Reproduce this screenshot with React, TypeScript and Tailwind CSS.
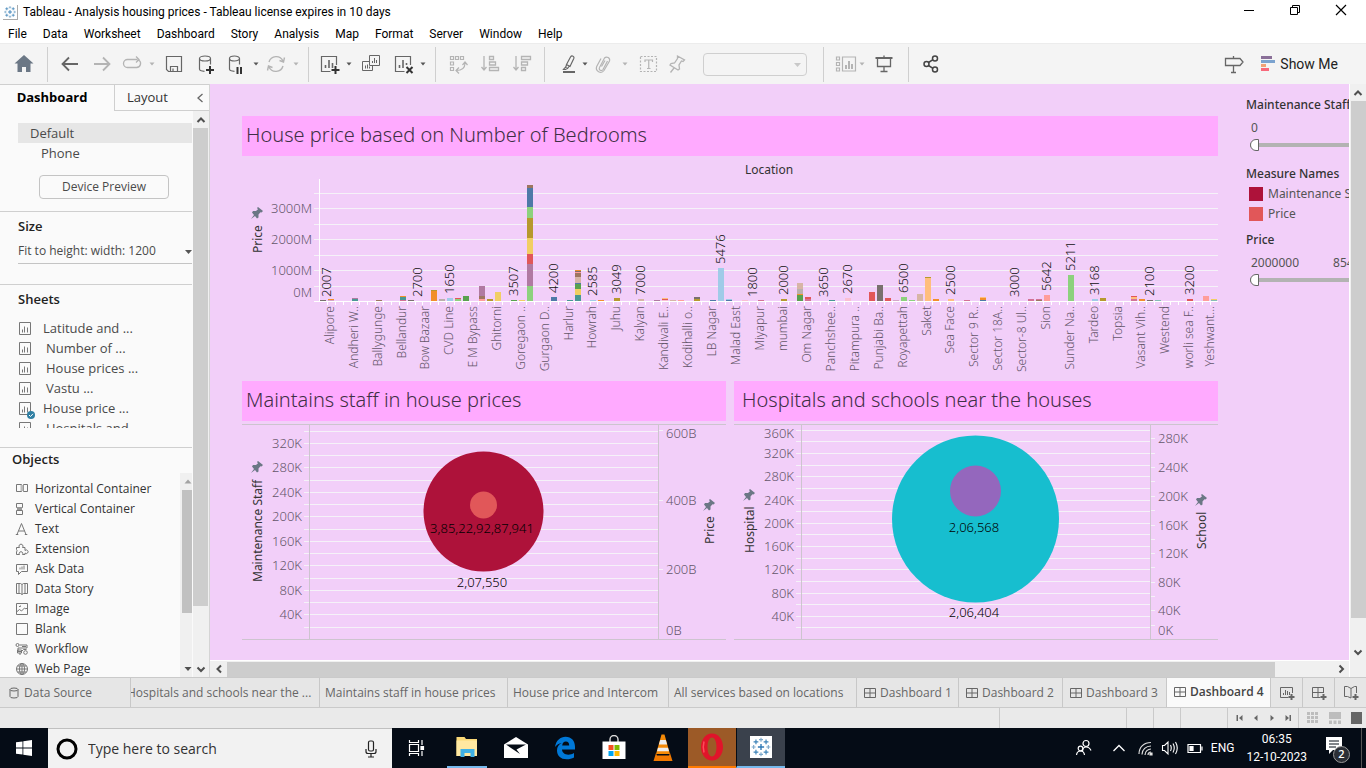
import React from "react";

const ui = "font-['Open_Sans','Noto_Sans',sans-serif]";

/* ---------- shared icon helpers ---------- */

function Ico({ children, size = 24, color = "#666", sw = 1, label }: { children: React.ReactNode; size?: number; color?: string; sw?: number; label?: string }) {
  return (
    <svg width={size} height={size} viewBox={`0 0 ${size} ${size}`} fill="none" stroke={color} strokeWidth={sw} aria-hidden={!label} aria-label={label} className="block shrink-0">
      {children}
    </svg>
  );
}

function ToolButton({ label, className = "", children }: { label: string; className?: string; children: React.ReactNode }) {
  return (
    <button type="button" aria-label={label} className={`flex h-6 w-6 shrink-0 items-center justify-center ${className}`}>
      {children}
    </button>
  );
}

function Caret({ className = "", light = false }: { className?: string; light?: boolean }) {
  return (
    <button type="button" aria-label="More" className={`flex h-6 w-2 shrink-0 items-center justify-center ${className}`}>
      <svg width="6" height="4" viewBox="0 0 6 4" className="block">
        <path d="M0.5 0.5h5L3 3.5z" fill={light ? "#b4b4b4" : "#555"} />
      </svg>
    </button>
  );
}

function Divider({ className = "" }: { className?: string }) {
  return <span className={`h-[35px] w-px shrink-0 bg-[#cfcfcf] ${className}`} />;
}

function TableauMark({ size, bg = "#fff" }: { size: number; bg?: string }) {
  const plus = (x: number, y: number, r: number, c: string, w: number) => (
    <path key={`${x}-${y}`} d={`M${x - r} ${y}h${r * 2}M${x} ${y - r}v${r * 2}`} stroke={c} strokeWidth={w} />
  );
  return (
    <svg width={size} height={size} viewBox="0 0 24 24" className="block shrink-0" aria-hidden>
      <rect width="24" height="24" fill={bg} />
      {plus(12, 12, 3.4, "#2f79b5", 1.5)}
      {plus(12, 4, 2.2, "#7aa7c9", 1.2)}
      {plus(12, 20, 2.2, "#7aa7c9", 1.2)}
      {plus(4, 12, 2.2, "#7aa7c9", 1.2)}
      {plus(20, 12, 2.2, "#7aa7c9", 1.2)}
      {plus(6.5, 6.5, 2.6, "#3b82b8", 1.3)}
      {plus(17.5, 6.5, 2.6, "#3b82b8", 1.3)}
      {plus(6.5, 17.5, 2.6, "#3b82b8", 1.3)}
      {plus(17.5, 17.5, 2.6, "#3b82b8", 1.3)}
    </svg>
  );
}

function Chevron({ dir }: { dir: "up" | "down" | "left" | "right" }) {
  const d = { up: "M1.5 7L5 3.5L8.5 7", down: "M1.5 3.5L5 7L8.5 3.5", left: "M7 1.5L3.5 5L7 8.5", right: "M3.5 1.5L7 5L3.5 8.5" }[dir];
  return (
    <svg width="10" height="10" viewBox="0 0 10 10" className="block" aria-hidden>
      <path d={d} fill="none" stroke="#4f4f4f" strokeWidth="2" />
    </svg>
  );
}

/* ---------- window chrome ---------- */

function TitleBar() {
  return (
    <header className="flex h-6 shrink-0 items-center bg-white pl-[3px] pr-[17px] font-['Roboto','Open_Sans',sans-serif]">
      <span className="border-b border-r border-[#aaa]"><TableauMark size={14} /></span>
      <h1 className="ml-[5px] text-xs text-black">Tableau - Analysis housing prices - Tableau license expires in 10 days</h1>
      <div className="ml-auto flex gap-[30px] pb-1">
        <button type="button" aria-label="Minimize">
          <Ico size={16} color="#000"><path d="M3 8.5h10" /></Ico>
        </button>
        <button type="button" aria-label="Restore">
          <Ico size={16} color="#000"><path d="M3.5 5.500h7v7h-7zM5.500 5V3.500h7v7H11" /></Ico>
        </button>
        <button type="button" aria-label="Close">
          <Ico size={16} color="#000" sw={1.2}><path d="M3 3l10 10M13 3L3 13" /></Ico>
        </button>
      </div>
    </header>
  );
}

function MenuBar() {
  const items = ["File", "Data", "Worksheet", "Dashboard", "Story", "Analysis", "Map", "Format", "Server", "Window", "Help"];
  return (
    <nav className="flex h-[19px] shrink-0 items-center gap-4 bg-white pl-2 font-['Roboto','Open_Sans',sans-serif] text-xs text-black">
      {items.map((m) => (
        <button key={m} type="button">{m}</button>
      ))}
    </nav>
  );
}

function Toolbar() {
  const d = "#666";
  const l = "#b4b4b4";
  return (
    <div role="toolbar" className="flex h-[41px] shrink-0 items-center border-t border-[#ececec] bg-[#f4f4f4]">
      <ToolButton label="Start page" className="ml-3 mr-[11px]">
        <Ico color="none"><path d="M12 3l9.500 8.500h-3V20h-4.500v-5h-4v5H5.500v-8.500h-3z" fill="#6b7785" /></Ico>
      </ToolButton>
      <Divider />
      <ToolButton label="Undo" className="ml-2.5"><Ico color={d} sw={1.8}><path d="M20 12H5M11 5.500L4.500 12l6.500 6.500" /></Ico></ToolButton>
      <ToolButton label="Redo" className="ml-2"><Ico color={l} sw={1.8}><path d="M4 12h15M13 5.500l6.500 6.500-6.500 6.500" /></Ico></ToolButton>
      <ToolButton label="Replay" className="ml-1.5"><Ico color={l} sw={1.3}><path d="M14 7.500H7.500a4 4 0 000 8h9a4 4 0 002-7.500M11.500 7.500h6M16 4.500l3 3-3 3" /></Ico></ToolButton>
      <Caret light className="ml-1" />
      <ToolButton label="Save" className="ml-1.5"><Ico color={d} sw={1.2}><path d="M4.500 4.500h15v15h-13l-2-2zM8.500 19.500v-5h7v5M11 19.500v-3" /></Ico></ToolButton>
      <ToolButton label="New data source" className="ml-2">
        <Ico color={d} sw={1.2}><path d="M5.500 6.500v10.500q0 2 5 2.300M16.500 6.500v6M5.500 6.500a5.500 2.500 0 0111 0a5.500 2.500 0 01-11 0" /><path d="M16 14v8M12 18h8" stroke="#333" strokeWidth="2" /></Ico>
      </ToolButton>
      <ToolButton label="Pause auto updates" className="ml-1.5">
        <Ico color={d} sw={1.2}><path d="M5.500 6.500v10.500q0 2 5 2.300M15.500 6.500v6M5.500 6.500a5 2.500 0 0110 0a5 2.500 0 01-10 0" /><path d="M13.500 15v7M17 15v7" stroke="#333" strokeWidth="2" /></Ico>
      </ToolButton>
      <Caret className="ml-1" />
      <ToolButton label="Run update" className="ml-1"><Ico color={l} sw={1.4}><path d="M5 10a7.500 7.500 0 0114 -1M19 14a7.500 7.500 0 01-14 1M20.500 5.500L19.500 10l-4-1.500M3.500 18.500L4.500 14l4 1.500" /></Ico></ToolButton>
      <Caret light className="ml-1" />
      <Divider className="ml-2" />
      <ToolButton label="New worksheet" className="ml-2">
        <Ico color={d} sw={1.2}><path d="M19.500 13V4.500h-15v15h9" /><path d="M8.500 16v-3M12 16V8M15.500 16v-5" strokeWidth="1.6" /><path d="M18.500 14v8M14.500 18h8" stroke="#333" strokeWidth="2" /></Ico>
      </ToolButton>
      <Caret className="ml-1" />
      <ToolButton label="Duplicate" className="ml-1.5">
        <Ico color={d}><path d="M10.500 3.500h10v10h-10zM10.500 9.500h-7v9h10v-5M6.500 16.500v-3M8.500 16.500v-4M10.500 16.500v-2M13.500 11v-2M15.500 11V6M17.500 11V8" /></Ico>
      </ToolButton>
      <ToolButton label="Clear sheet" className="ml-2">
        <Ico color={d} sw={1.2}><path d="M19.500 13V4.500h-15v15h9" /><path d="M8.500 16v-3M12 16V8M15.500 13v-2" strokeWidth="1.6" /><path d="M15.500 15l6 6M21.500 15l-6 6" stroke="#333" strokeWidth="2" /></Ico>
      </ToolButton>
      <Caret className="ml-1" />
      <Divider className="ml-2" />
      <ToolButton label="Swap rows and columns" className="ml-2.5">
        <Ico color={l} sw={1.2}><path d="M4.500 4.500h3v3h-3zM9.500 4.500h3v3h-3zM14.500 4.500h3v3h-3zM4.500 10h3v3h-3zM4.500 15.500h3v3h-3zM19 11c0 5-3 7.500-8.500 7.500M16.500 13l2.500-3 2.500 3M13 15.500l-3 3 3 3" /></Ico>
      </ToolButton>
      <ToolButton label="Sort ascending" className="ml-2">
        <Ico color={l} sw={1.3}><path d="M6 4v14M3.500 15l2.500 3 2.500-3M11.500 4.500h4v3h-4zM11.500 10h6v3h-6zM11.500 15.500h9v3h-9z" /></Ico>
      </ToolButton>
      <ToolButton label="Sort descending" className="ml-2">
        <Ico color={l} sw={1.3}><path d="M6 4v14M3.500 15l2.500 3 2.500-3M11.500 4.500h9v3h-9zM11.500 10h6v3h-6zM11.500 15.500h4v3h-4z" /></Ico>
      </ToolButton>
      <Divider className="ml-2.5" />
      <ToolButton label="Highlight" className="ml-3">
        <Ico color={d} sw={1.2}><path d="M9.500 12.500L13.500 5q1-1.500 2.500-.8t.8 2.300L13 14.500l-3.500-2zM9.500 13l-1 2.500 2 1 1.500-2M8 15.500l-1.500 2h3" /><path d="M6 20h12" strokeWidth="2" /></Ico>
      </ToolButton>
      <Caret />
      <ToolButton label="Group members" className="ml-0.5">
        <Ico color={l} sw={1.2}><path d="M16.500 9l-4.500 8.500a2 2 0 01-3.500-2l5-9.500a3 3 0 015 3l-5.500 9.500a4.200 4.200 0 01-7.300-4l4.300-8M10.500 14.500l3.500-6" /></Ico>
      </ToolButton>
      <Caret light className="ml-1.5" />
      <ToolButton label="Show mark labels" className="ml-2">
        <Ico color={l} sw={1.2}><path d="M3.500 4.500h16v15h-16z" strokeDasharray="2 1.500" /><path d="M8 10V8h7.500v2M11.750 8v8.500M10 16.500h3.500" /></Ico>
      </ToolButton>
      <ToolButton label="Fix axes" className="ml-1">
        <Ico color={l} sw={1.3}><path d="M12.500 4l7 4-1.500 1.500-1.500-.5-2.500 4 .5 4-1.500 1L5 13l1-1.500 3.500-.5 3-4.500zM9 16l-3.500 4.500" /></Ico>
      </ToolButton>
      <div className="relative ml-3.5 h-[23px] w-[104px]">
        <select aria-label="Fit" disabled className="h-full w-full appearance-none rounded-sm border border-[#cfcfcf] bg-transparent" />
        <svg width="7" height="4" viewBox="0 0 7 4" className="pointer-events-none absolute right-1.5 top-2.5"><path d="M0 0h7L3.500 4z" fill="#c8c8c8" /></svg>
      </div>
      <Divider className="ml-4" />
      <ToolButton label="Show cards" className="ml-2.5">
        <Ico color={l} sw={1.2}><path d="M2.500 5h3v3h-3zM2.500 10.500h3v3h-3zM2.500 16h3v3h-3zM8.500 5h13v14h-13z" /><path d="M12 17v-4M15 17v-8M18 17v-5" strokeWidth="2" /></Ico>
      </ToolButton>
      <Caret light />
      <ToolButton label="Presentation mode" className="ml-1.5">
        <Ico color={d} sw={1.3}><path d="M3.500 6h17" strokeWidth="2" /><path d="M5.500 6v8.500h13V6M12 14.500v5M8.500 19.500h7M12 3.500V6" /></Ico>
      </ToolButton>
      <Divider className="ml-3" />
      <ToolButton label="Share" className="ml-2.5">
        <Ico color="#444" sw={1.5}><circle cx="7.500" cy="12" r="2.500" /><circle cx="16" cy="6.500" r="2.500" /><circle cx="16" cy="17.500" r="2.500" /><path d="M9.500 10.500l4.500-2.800M9.500 13.500l4.500 2.800" /></Ico>
      </ToolButton>
      <ToolButton label="Guide" className="ml-auto">
        <Ico color="#666" sw={1.3}><path d="M3.500 6.500h14.500l3 3.500-3 3.500H3.500zM11.500 4v2.500M11.500 13.500V20.500M9 20.500h5" /></Ico>
      </ToolButton>
      <button type="button" className="ml-3.5 mr-7 flex items-center gap-1 font-['Roboto','Open_Sans',sans-serif] text-sm text-[#222]">
        <svg width="16" height="16" viewBox="0 0 16 16" aria-hidden>
          <path d="M1 0h11v3H1z" fill="#8a6f98" /><path d="M1 4h14v3H1z" fill="#7ba3cf" /><path d="M1 8h5v3H1z" fill="#f0a277" /><path d="M1 12h8v3H1z" fill="#f8697b" />
        </svg>
        Show Me
      </button>
    </div>
  );
}

/* ---------- left panel ---------- */

function SheetIcon() {
  return <Ico size={14} color="#777"><path d="M1.500 .5h11v12h-11zM4.500 10.500v-3M6.500 10.500v-6M9.500 10.500v-5" /></Ico>;
}

const objectIcons: [string, React.ReactNode][] = [
  ["Horizontal Container", <><path d="M1.500 2.500h5v7h-5zM8.500 2.500h4v7h-4z" /><path d="M5.500 3h3v6h-3z" fill="#bbb" stroke="none" /></>],
  ["Vertical Container", <><path d="M1.500 1.500h6v4h-6zM1.500 8.500h6v4h-6z" /><path d="M2 5h5v3H2z" fill="#999" stroke="none" /></>],
  ["Text", <path key="t" d="M2 12.500L6.500 1.500L11 12.500M3.500 9h6M.8 12.500h2.500M9.800 12.500h2.500" />],
  ["Extension", <path key="e" d="M1.500 5.500h3a2 2 0 113 0h2.500v3a1.800 1.800 0 110 2.500v1.500H7.500a1.800 1.800 0 10-3 0h-3v-2.500a1.800 1.800 0 000-2.500z" />],
  ["Ask Data", <><path d="M1.500 2.500h11v7H6.500l-3 3v-3h-2z" /><path d="M4 5.500v2h6v-4H8v1H6v1z" fill="#bbb" stroke="none" /></>],
  ["Data Story", <path key="d" d="M7 2.500v10M7 2.500L5.500 1.500h-4v10h4l1.500 1 1.500-1h4v-10h-4zM4 1.500v10M10 1.500v10" />],
  ["Image", <path key="i" d="M1.500 1.500h11v11h-11zM1.500 10l3-2.500 2 1.500 3-3 1.500 1 1.500-1.500M4 4.500h1.500V3.500" />],
  ["Blank", <path key="b" d="M1.500 1.500h11v11h-11z" />],
  ["Workflow", <><circle cx="2.500" cy="3" r="1.500" /><path d="M4.500 3h7.500v3H3v3.500h3M2.500 8h4v3h-4zM7 4.500h4M6.500 9.500l2-2h3M5 11v2" /><circle cx="10.500" cy="10.500" r="1.800" /></>],
  ["Web Page", <><circle cx="7" cy="7" r="5.500" /><ellipse cx="7" cy="7" rx="2.500" ry="5.500" /><path d="M1.500 7h11M7 1.500v11M2.500 4h9M2.500 10h9" /></>],
];

function SidePanel() {
  const sheets: [string, boolean, boolean][] = [
    ["Latitude and ...", false, false],
    ["Number of ...", true, false],
    ["House prices ...", true, false],
    ["Vastu ...", true, false],
    ["House price ...", false, true],
    ["Hospitals and ...", true, false],
  ];
  return (
    <aside className="flex w-[210px] shrink-0 flex-col border-r border-[#d4d4d4] bg-[#fafafa] text-[13px] text-[#4a4a4a]">
      <div role="tablist" className="flex h-[27px] shrink-0 border-t border-[#cfcfcf] text-black">
        <button type="button" role="tab" aria-selected="true" className="w-[114px] pr-2.5 pb-px text-center font-bold">Dashboard</button>
        <div className="flex flex-1 items-center border-b border-l border-[#cfcfcf]">
          <button type="button" role="tab" aria-selected="false" className="pl-3 text-[#333]">Layout</button>
          <button type="button" aria-label="Collapse panel" className="ml-auto mr-1">
            <svg width="10" height="12" viewBox="0 0 10 12"><path d="M7.500 2L3 6l4.500 4" fill="none" stroke="#666" strokeWidth="1.300" /></svg>
          </button>
        </div>
      </div>
      <div className="flex min-h-0 flex-1">
        <div className="mr-px flex min-w-0 flex-1 flex-col">
          <section className="border-b border-[#cfcfcf] pb-3 pl-[18px] pt-3">
            <button type="button" className="block h-5 w-full bg-[#e6e6e6] pl-3 text-left leading-5">Default</button>
            <button type="button" className="block h-5 pl-[23px] text-left leading-5">Phone</button>
            <button type="button" className="ml-[21px] mt-3 block h-6 w-[130px] rounded-sm border border-[#c4c4c4] text-xs">Device Preview</button>
          </section>
          <section className="border-b border-[#cfcfcf] pb-5 pl-[18px] pt-1">
            <h2 className="font-semibold leading-5 text-[#222]">Size</h2>
            <div className="relative mt-1.5 border-b border-[#c4c4c4]">
              <select aria-label="Size" className="block h-[21px] w-full appearance-none bg-transparent pb-1 text-xs">
                <option>Fit to height: width: 1200</option>
              </select>
              <svg width="7" height="4" viewBox="0 0 7 4" className="pointer-events-none absolute right-0 top-2"><path d="M0 0h7L3.500 4z" fill="#555" /></svg>
            </div>
          </section>
          <section className="h-[163px] shrink-0 border-b border-[#cfcfcf] pl-[18px] pt-1">
            <h2 className="font-semibold leading-5 text-[#222]">Sheets</h2>
            <ul className="mt-2.5 h-[109px] overflow-hidden">
              {sheets.map(([name, inset, used]) => (
                <li key={name} className="h-5">
                  <button type="button" className="relative flex h-5 items-center">
                    <SheetIcon />
                    {used && (
                      <svg width="8" height="8" viewBox="0 0 8 8" className="absolute left-[9px] top-3">
                        <circle cx="4" cy="4" r="4" fill="#2f7fa3" />
                        <path d="M2 4l1.500 1.500L6 2.800" stroke="#fff" fill="none" />
                      </svg>
                    )}
                    <span className={inset ? "ml-3.5" : "ml-[11px]"}>{name}</span>
                  </button>
                </li>
              ))}
            </ul>
          </section>
          <section className="flex min-h-0 flex-1 flex-col">
            <h2 className="pl-3 pt-px font-semibold leading-5 text-[#222]">Objects</h2>
            <div className="mt-1 flex min-h-0 flex-1">
              <ul className="min-w-0 flex-1 overflow-hidden pl-[15px] pt-1.5 text-xs text-[#333]">
                {objectIcons.map(([name, icon]) => (
                  <li key={name} className="h-5">
                    <button type="button" className="flex h-5 items-center gap-1.5 whitespace-nowrap">
                      <Ico size={14} color="#777">{icon}</Ico>
                      {name}
                    </button>
                  </li>
                ))}
              </ul>
              <div className="flex w-3 shrink-0 flex-col items-end bg-[#f0f0f0]">
                <svg width="10" height="17" viewBox="0 0 10 17"><path d="M2.500 10.500h7L6 6.500z" fill="#a3a3a3" /></svg>
                <div className="h-[123px] w-2.5 bg-[#c1c1c1]" />
                <svg width="10" height="17" viewBox="0 0 10 17" className="mt-auto"><path d="M2.500 7h7L6 11z" fill="#505050" /></svg>
              </div>
            </div>
          </section>
        </div>
        <div className="flex w-4 shrink-0 flex-col bg-[#f0f0f0]">
          <div className="flex h-[17px] items-center justify-center"><Chevron dir="up" /></div>
          <div className="h-[478px] w-[15px] bg-[#cdcdcd]" />
          <div className="mt-auto flex h-[17px] items-center justify-center"><Chevron dir="down" /></div>
        </div>
      </div>
    </aside>
  );
}

/* ---------- charts ---------- */

const C = {
  blue: "#4e79a7", lblue: "#a0cbe8", orange: "#f28e2b", lorange: "#ffbe7d", green: "#59a14f", lgreen: "#8cd17d",
  olive: "#b6992d", yellow: "#f1ce63", teal: "#499894", lteal: "#86bcb6", red: "#e15759", lred: "#ff9d9a",
  gray: "#79706e", lgray: "#bab0ac", pink: "#d37295", lpink: "#fabfd2", purple: "#b07aa1", lpurple: "#d4a6c8", brown: "#9d7660", beige: "#d7b5a6",
};
type Seg = [keyof typeof C, number];
const SLOTS = 113;
const bars: Record<number, Seg[]> = {
  0: [["gray", 1]], 1: [["lpurple", 1], ["orange", 1]], 4: [["teal", 2], ["purple", 1]], 7: [["brown", 1]],
  10: [["pink", 1], ["teal", 3], ["orange", 1]], 11: [["gray", 1]], 14: [["orange", 10], ["olive", 1]], 15: [["lgray", 2]],
  16: [["lblue", 3]], 17: [["lgreen", 2], ["red", 1]], 18: [["green", 5]], 20: [["lred", 2], ["brown", 3], ["purple", 10]],
  21: [["olive", 2]], 22: [["yellow", 9]], 24: [["green", 1]], 25: [["yellow", 1]],
  26: [["lgreen", 15], ["purple", 22], ["red", 10], ["yellow", 16], ["olive", 20], ["lgreen", 11], ["blue", 19], ["brown", 3]],
  29: [["blue", 4]], 31: [["teal", 1]],
  32: [["teal", 6], ["yellow", 6], ["green", 5], ["blue", 1], ["beige", 6], ["brown", 4], ["lred", 1], ["gray", 1], ["orange", 1]],
  34: [["lblue", 1]], 35: [["orange", 1]], 37: [["olive", 3]], 40: [["beige", 2]], 42: [["purple", 1]],
  43: [["lpink", 1], ["red", 1], ["lorange", 1]], 44: [["beige", 1]], 45: [["lred", 1]], 47: [["olive", 2], ["gray", 2]],
  49: [["blue", 1]], 50: [["lblue", 33]], 51: [["blue", 1], ["lblue", 1]], 53: [["lpink", 1]], 55: [["pink", 1]], 58: [["olive", 2]],
  60: [["green", 6], ["orange", 1], ["lgray", 5], ["beige", 6]], 61: [["pink", 2], ["red", 2]], 64: [["teal", 1]], 66: [["lpink", 3]],
  69: [["red", 9]], 70: [["gray", 16]], 71: [["red", 3]], 72: [["lpurple", 1]], 73: [["lgreen", 4]], 74: [["lgreen", 1]],
  75: [["beige", 7]], 76: [["lorange", 23], ["olive", 1]], 77: [["orange", 2]], 79: [["lorange", 2]], 81: [["pink", 1]],
  83: [["blue", 1], ["orange", 2], ["lorange", 1]], 89: [["pink", 2]], 90: [["brown", 1], ["pink", 1]], 91: [["lred", 6]],
  94: [["lgreen", 26]], 97: [["lblue", 2]], 98: [["olive", 3]], 102: [["pink", 2], ["lorange", 2], ["red", 1]], 103: [["orange", 2]],
  104: [["gray", 1]], 105: [["lteal", 1]], 109: [["red", 2]], 111: [["lred", 5]], 112: [["lteal", 1], ["yellow", 1]],
};
const values: Record<number, string> = {
  0.5: "2007", 12: "2700", 16: "1650", 24: "3507", 29: "4200", 34: "2585", 37: "3049", 40: "7000", 50: "5476", 54: "1800", 58: "2000",
  63: "3650", 66: "2670", 73: "6500", 79: "2500", 87: "3000", 91: "5642", 94: "5211", 97: "3168", 104: "2100", 109: "3200",
};
const places = [
  "Alipore", "Andheri W..", "Ballygunge", "Bellandur", "Bow Bazaar", "CVD Line", "E M Bypass", "Ghitorni", "Goregaon ..", "Gurgaon D..",
  "Harlur", "Howrah", "Juhu", "Kalyan", "Kandivali E..", "Kodihalli o..", "LB Nagar", "Malad East", "Miyapur", "mumbai", "Om Nagar",
  "Panchshee..", "Pitampura ..", "Punjabi Ba..", "Royapettah", "Saket", "Sea Face", "Sector 9 R..", "Sector 18A..", "Sector-8 Ul..", "Sion",
  "Sunder Na..", "Tardeo", "Topsia", "Vasant Vih..", "Westend", "worli sea F..", "Yeshwant...",
];
const slotX = (i: number) => Math.round(78 + i * 7.955);

function Pin({ x, y }: { x: number; y: number }) {
  return (
    <g transform={`translate(${x} ${y})`}>
      <path d="M1 -6L6 -2L4.500 -.5L3.500 -.7L1.500 1.500L1.500 4.500L0 5.500L-2 3L-6 6L-3 2L-5 -.5L-4 -2L-1 -2L1 -3.800L0 -5z" fill="#6b7785" />
    </g>
  );
}

function VText({ x, y, children, fill = "#333", anchor = "start", size = "text-xs" }: { x: number; y: number; children: string; fill?: string; anchor?: "start" | "end"; size?: string }) {
  return (
    <text transform={`translate(${x} ${y}) rotate(-90)`} textAnchor={anchor} fill={fill} className={size}>{children}</text>
  );
}

const grid = "#f5f2f8";
const axisText = "#64566a";

function PriceChart() {
  return (
    <svg viewBox="0 0 976 225" className="block w-full text-xs" role="img" aria-label="House price by location">
      <text x="527" y="18" textAnchor="middle" fill="#333">Location</text>
      {[37, 52, 68, 83, 99, 114, 130].map((y) => <rect key={y} x="72" y={y} width="904" height="1" fill={grid} />)}
      <rect x="72" y="145" width="904" height="1" fill="#fff" />
      <rect x="77" y="23" width="1" height="123" fill="#fff" />
      {Array.from({ length: SLOTS }, (_, i) => <rect key={i} x={slotX(i) + 7} y="146" width="1" height="3" fill="#fff" />)}
      {([["3000M", 57], ["2000M", 88], ["1000M", 119], ["0M", 141]] as [string, number][]).map(([t, y]) => (
        <text key={t} x="70" y={y} textAnchor="end" fill={axisText} className="text-[13px] font-light">{t}</text>
      ))}
      <Pin x={15} y={57} />
      <VText x={20} y={97}>Price</VText>
      {Object.entries(bars).map(([k, segs]) => {
        let y = 145;
        return segs.map(([c, h], j) => {
          y -= h;
          return <rect key={`${k}-${j}`} x={slotX(+k)} y={y} width="6" height={h} fill={C[c]} />;
        });
      })}
      {Object.entries(values).map(([k, v]) => {
        const h = (bars[+k] ?? []).reduce((a, s) => a + s[1], 0);
        return <VText key={k} x={slotX(+k) + 7} y={141 - h} fill="#111" size="text-[13px] font-light">{v}</VText>;
      })}
      {places.map((p, n) => (
        <VText key={p} x={Math.min(slotX(1 + n * 3) + 6, 972)} y={150} anchor="end" fill={axisText} size="text-xs font-light">{p}</VText>
      ))}
    </svg>
  );
}

type Axis = { label: string; y: number }[];
interface BubbleProps {
  title: string; lines: number[]; left: Axis; rightTicks: number[]; right: Axis;
  leftTitle: [string, number, number]; rightTitle: [string, number, number];
  big: [number, number, string]; small: [number, number, string];
  inner: [string, number]; outer: [string, number];
}

function BubbleChart(p: BubbleProps) {
  return (
    <svg viewBox="0 0 484 224" className="block w-full text-[13px] font-light" role="img" aria-label={p.title}>
      {p.lines.map((y) => <rect key={y} x="62" y={y} width="354" height="1" fill={grid} />)}
      {p.rightTicks.map((y) => <rect key={y} x="417" y={y} width="4" height="1" fill={grid} />)}
      <path d="M0 3.500H484M0 218.500H484M67.500 4V218M416.500 4V218" stroke="#cdc4cf" fill="none" />
      {p.left.map((a) => <text key={a.label} x="60" y={a.y + 5} textAnchor="end" fill={axisText}>{a.label}</text>)}
      {p.right.map((a) => <text key={a.label} x="424" y={a.y + 5} fill={axisText}>{a.label}</text>)}
      <Pin x={15} y={p.leftTitle[2]} />
      <VText x={20} y={p.leftTitle[1]} size="text-xs font-normal">{p.leftTitle[0]}</VText>
      <Pin x={467} y={p.rightTitle[2]} />
      <VText x={472} y={p.rightTitle[1]} size="text-xs font-normal">{p.rightTitle[0]}</VText>
      <circle cx="241.5" cy={p.big[0]} r={p.big[1]} fill={p.big[2]} />
      <circle cx="241.5" cy={p.small[0]} r={p.small[1]} fill={p.small[2]} />
      <text x="240" y={p.inner[1]} textAnchor="middle" fill="#000">{p.inner[0]}</text>
      <text x="240" y={p.outer[1]} textAnchor="middle" fill="#000">{p.outer[0]}</text>
    </svg>
  );
}

const axis = (labels: string[], ys: number[]): Axis => labels.map((label, i) => ({ label, y: ys[i] }));

const staffChart: BubbleProps = {
  title: "Maintains staff in house prices",
  lines: [10, 22, 34, 46, 59, 71, 83, 95, 108, 120, 132, 144, 157, 169, 181, 193, 206],
  left: axis(["320K", "280K", "240K", "200K", "160K", "120K", "80K", "40K"], [22, 46, 71, 95, 120, 144, 169, 193]),
  rightTicks: [9, 79, 148],
  right: axis(["600B", "400B", "200B", "0B"], [12, 79, 148, 209]),
  leftTitle: ["Maintenance Staff", 161, 46],
  rightTitle: ["Price", 123, 84],
  big: [90.5, 60, "#ae123a"],
  small: [84, 13.5, "#e15759"],
  inner: ["3,85,22,92,87,941", 112],
  outer: ["2,07,550", 166],
};

const schoolChart: BubbleProps = {
  title: "Hospitals and schools near the houses",
  lines: [9, 20, 32, 44, 55, 67, 79, 90, 102, 113, 125, 137, 148, 160, 172, 183, 195, 206],
  left: axis(["360K", "320K", "280K", "240K", "200K", "160K", "120K", "80K", "40K"], [12, 32, 55, 79, 102, 125, 148, 172, 195]),
  rightTicks: [17, 32, 46, 60, 75, 89, 104, 118, 132, 146, 161, 175, 189, 204],
  right: axis(["280K", "240K", "200K", "160K", "120K", "80K", "40K", "0K"], [17, 46, 75, 104, 132, 161, 189, 209]),
  leftTitle: ["Hospital", 132, 74],
  rightTitle: ["School", 128, 79],
  big: [98, 83.5, "#17becf"],
  small: [70, 25.5, "#9467bd"],
  inner: ["2,06,568", 111],
  outer: ["2,06,404", 196],
};

function Band({ children, inset = false }: { children: string; inset?: boolean }) {
  return <h2 className={`flex h-10 items-center bg-[#ffaaff] pb-0.5 text-xl font-light text-[#3f2f45] ${inset ? "pl-2" : "pl-1"}`}>{children}</h2>;
}

function RangeFilter({ id, title, min, max }: { id: string; title: string; min: string; max?: string }) {
  return (
    <div>
      <label htmlFor={id} className="block text-xs font-medium leading-5 text-[#333]">{title}</label>
      <div className="mt-1 flex w-[160px] gap-[34px] pl-[5px] text-xs leading-[18px] text-[#555]">
        <span>{min}</span>
        {max && <span>{max}</span>}
      </div>
      <input
        id={id}
        type="range"
        defaultValue={0}
        className="ml-1 block h-4 w-[160px] appearance-none bg-transparent [&::-webkit-slider-runnable-track]:h-1 [&::-webkit-slider-runnable-track]:bg-[#b3b3b3] [&::-webkit-slider-thumb]:-mt-1 [&::-webkit-slider-thumb]:h-3 [&::-webkit-slider-thumb]:w-[9px] [&::-webkit-slider-thumb]:appearance-none [&::-webkit-slider-thumb]:rounded-l-full [&::-webkit-slider-thumb]:border [&::-webkit-slider-thumb]:border-[#666] [&::-webkit-slider-thumb]:bg-white"
      />
    </div>
  );
}

function Legend() {
  return (
    <aside className="w-[103px] shrink-0 overflow-hidden whitespace-nowrap pt-[11px] font-['Noto_Sans',sans-serif]">
      <RangeFilter id="staff" title="Maintenance Staff" min="0" />
      <h3 className="mt-[11px] text-xs font-medium leading-5 text-[#333]">Measure Names</h3>
      <ul className="text-xs text-[#555]">
        <li className="flex h-5 items-center gap-[5px] pl-[3px]"><span className="h-3.5 w-3.5 shrink-0 bg-[#ae123a]" />Maintenance Staff</li>
        <li className="flex h-5 items-center gap-[5px] pl-[3px]"><span className="h-3.5 w-3.5 shrink-0 bg-[#e15759]" />Price</li>
      </ul>
      <div className="mt-1.5">
        <RangeFilter id="price" title="Price" min="2000000" max="854599999" />
      </div>
    </aside>
  );
}

function Workspace() {
  return (
    <div className="flex min-w-0 flex-1">
      <div className="flex min-w-0 flex-1 flex-col">
        <main className="flex min-h-0 flex-1 gap-7 overflow-hidden bg-[#f2cff9] pl-8">
          <div className="min-w-0 flex-1 pt-8 font-['Noto_Sans',sans-serif]">
            <Band>House price based on Number of Bedrooms</Band>
            <PriceChart />
            <div className="grid grid-cols-2 gap-2">
              <div>
                <Band>Maintains staff in house prices</Band>
                <BubbleChart {...staffChart} />
              </div>
              <div>
                <Band inset>Hospitals and schools near the houses</Band>
                <BubbleChart {...schoolChart} />
              </div>
            </div>
          </div>
          <Legend />
        </main>
        <div className="flex h-[17px] shrink-0 items-center border-t border-white bg-[#f0f0f0]">
          <span className="flex w-[17px] justify-center"><Chevron dir="left" /></span>
          <span className="h-[15px] w-[92%] bg-[#cdcdcd]" />
          <span className="ml-auto flex w-[17px] justify-center"><Chevron dir="right" /></span>
        </div>
      </div>
      <div className="flex w-[17px] shrink-0 flex-col items-center border-l border-white bg-[#f0f0f0]">
        <div className="flex h-[17px] items-center"><Chevron dir="up" /></div>
        <div className="min-h-0 w-[15px] flex-1 bg-[#cdcdcd]" />
        <div className="mb-[17px] mt-[25px] flex h-[17px] items-center"><Chevron dir="down" /></div>
      </div>
    </div>
  );
}

/* ---------- bottom tabs and status ---------- */

function GridIcon() {
  return <Ico size={12} color="#666"><path d="M.5 1.500h11v9H.5zM6 1.500v9M.5 6h11" /></Ico>;
}

function SheetTabs() {
  const tab = "flex shrink-0 items-center border-r border-[#c8c8c8] text-xs text-[#666] whitespace-nowrap overflow-hidden";
  return (
    <nav className="flex h-[31px] shrink-0 border-y border-[#cacaca] bg-[#e6e6e6]">
      <button type="button" className={`${tab} w-[131px] gap-1 pl-2`}>
        <Ico size={12} color="#666"><path d="M2 2.500v7q0 1.500 4 1.500t4-1.500v-7M2 2.500a4 1.500 0 018 0a4 1.500 0 01-8 0" /></Ico>
        Data Source
      </button>
      <button type="button" className={`${tab} w-[189px]`}><span className="-ml-1">Hospitals and schools near the ...</span></button>
      <button type="button" className={`${tab} w-[188px] pl-[5px]`}>Maintains staff in house prices</button>
      <button type="button" className={`${tab} w-[161px] pl-[5px]`}>House price and Intercom</button>
      <button type="button" className={`${tab} w-[188px] pl-[5px]`}>All services based on locations</button>
      <button type="button" className={`${tab} w-[102px] gap-1 pl-[7px]`}><GridIcon />Dashboard 1</button>
      <button type="button" className={`${tab} w-[104px] gap-1 pl-[7px]`}><GridIcon />Dashboard 2</button>
      <button type="button" className={`${tab} w-[104px] gap-1 pl-[7px]`}><GridIcon />Dashboard 3</button>
      <button type="button" className="flex w-[104px] shrink-0 items-center gap-1 whitespace-nowrap border-r border-[#c8c8c8] bg-[#fafafa] pb-0.5 pl-[7px] text-xs font-semibold text-[#444]"><GridIcon />Dashboard 4</button>
      <button type="button" aria-label="New worksheet" className="flex flex-1 items-center justify-center border-r border-[#c8c8c8]">
        <Ico size={16}><path d="M13.500 8V2.500h-12v10h8M4.500 10V8M6.500 10V5M8.500 10V6M10.500 10V7" /><path d="M12.500 9v6M9.500 12h6" strokeWidth="2" /></Ico>
      </button>
      <button type="button" aria-label="New dashboard" className="flex flex-1 items-center justify-center border-r border-[#c8c8c8]">
        <Ico size={16}><path d="M12.500 8V2.500h-11v10h8M7 2.500v10M1.500 7.500h11" /><path d="M12.500 9v6M9.500 12h6" strokeWidth="2" /></Ico>
      </button>
      <button type="button" aria-label="New story" className="flex flex-1 items-center justify-center">
        <Ico size={16}><path d="M13.500 8V1.500h-2l-3.500 2-3.500-2h-3v10h3l3.500 1.500V3.500" /><path d="M12.500 9v6M9.500 12h6" strokeWidth="2" /></Ico>
      </button>
    </nav>
  );
}

function StatusBar() {
  const cell = "h-full shrink-0 border-l border-[#cacaca]";
  const nav: [string, string][] = [
    ["First", "M0 1h1.500v6H0zM6 1v6L2.500 4z"],
    ["Previous", "M5 1v6L1.500 4z"],
    ["Next", "M2 1v6l3.500-3z"],
    ["Last", "M1 1v6l3.500-3zM5 1h1.500v6H5z"],
  ];
  return (
    <div className="flex h-5 shrink-0 items-center justify-end bg-[#eaeaea]">
      <span className={`${cell} w-[127px]`} />
      <span className={`${cell} w-[27px]`} />
      <span className={`${cell} w-[27px]`} />
      <span className={`${cell} w-[47px]`} />
      <div className={`${cell} flex w-[71px] items-center gap-2 pl-2`}>
        {nav.map(([n, d]) => (
          <button key={n} type="button" aria-label={n}><svg width="8" height="8" viewBox="0 0 7 8" className="block"><path d={d} fill="#666" /></svg></button>
        ))}
      </div>
      <div className={`${cell} flex w-[68px] items-center gap-2.5 pl-2`}>
        <button type="button" aria-label="Sheet sorter"><svg width="12" height="12" viewBox="0 0 12 12" className="block" fill="#bdbdbd">
          {[0, 4, 8].map((y) => [0, 4, 8].map((x) => <rect key={`${x}${y}`} x={x} y={y} width="3" height="3" />))}
        </svg></button>
        <button type="button" aria-label="Filmstrip"><svg width="12" height="12" viewBox="0 0 12 12" className="block" fill="#bdbdbd"><path d="M0 0h12v7H0zM0 8.500h3V12H0zM4.500 8.500h3V12h-3zM9 8.500h3V12H9z" /></svg></button>
        <button type="button" aria-label="Tabs"><svg width="12" height="12" viewBox="0 0 12 12" className="block"><rect width="11" height="12" fill="#666" /></svg></button>
      </div>
    </div>
  );
}

/* ---------- taskbar ---------- */

function Taskbar() {
  const app = "flex h-10 shrink-0 items-center justify-center";
  return (
    <footer className="flex h-10 shrink-0 items-center bg-[#050c16] text-white">
      <button type="button" aria-label="Start" className={`${app} w-12`}>
        <svg width="16" height="16" viewBox="0 0 16 16" fill="#fff"><path d="M0 2.300L6.500 1.400V7.600H0zM7.300 1.300L16 0V7.600H7.300zM0 8.400H6.500V14.600L0 13.700zM7.300 8.400H16V16L7.300 14.700z" /></svg>
      </button>
      <div className="flex h-10 w-[344px] shrink-0 items-center border-t border-[#c0c0c0] bg-[#f2f2f2] pl-2 pr-3">
        <svg width="22" height="22" viewBox="0 0 22 22" className="shrink-0"><circle cx="11" cy="11" r="9" fill="none" stroke="#000" strokeWidth="3" /></svg>
        <input aria-label="Search" placeholder="Type here to search" className="ml-2.5 min-w-0 flex-1 bg-transparent text-sm placeholder:text-[#333]" />
        <button type="button" aria-label="Voice search"><Ico size={18} color="#222" sw={1.200}><rect x="6.500" y="1" width="5" height="10" rx="1.500" /><path d="M4 9v2.500q0 2 2 2h6q2 0 2-2V9M9 13.500V17M6 17h6" /></Ico></button>
      </div>
      <button type="button" aria-label="Task view" className={`${app} w-12`}>
        <Ico size={18} color="#fff" sw={1.200}><path d="M2.500 5.500h9v7h-9zM2.500 1v2.500h9V1M2.500 17v-2.500h9V17M15 1v5M15 12v5" /><path d="M14 7.500h2.500v3H14z" fill="#fff" /></Ico>
      </button>
      <button type="button" aria-label="File Explorer" className={`${app} ml-[7px] mr-1 w-10 border-b-2 border-[#76b9ed]`}>
        <svg width="22" height="22" viewBox="0 0 22 22"><path d="M.5 1h8l1.500 2h11v17H.5z" fill="#fbd977" /><path d="M.5 4.500h20.500V20H.5z" fill="#ffe8a1" /><path d="M4.500 13h14v8h-4v-4h-6v4h-4z" fill="#3fb1e6" /></svg>
      </button>
      <button type="button" aria-label="Mail" className={`${app} w-[50px]`}>
        <svg width="24" height="22" viewBox="0 0 24 22"><path d="M0 7.500L12 0l12 7.500V21H0z" fill="#fff" /><path d="M2 7.500h20L12.500 12.500 16 17l-6-4z" fill="#050c16" /></svg>
      </button>
      <button type="button" aria-label="Edge" className={`${app} w-12`}>
        <svg width="22" height="24" viewBox="0 0 22 24"><path d="M1 11C2 4.500 6.500 .8 11.500 .8 17.500 .8 21 5 21 10.800v2.700H8c.2 3.300 3 5.200 6.200 5.200 2.200 0 4.200-.6 5.800-1.600v4.400c-2 1.200-4.500 1.800-7.200 1.800C6.500 23.300 3 19.500 3 14.500c0-3.200 1.700-6 4.600-7.400C5 7.500 2.800 8.700 1 11zM8.200 9.500h7c0-2.600-1.200-4-3.300-4s-3.400 1.600-3.700 4z" fill="#0078d7" /></svg>
      </button>
      <button type="button" aria-label="Store" className={`${app} w-[49px]`}>
        <svg width="24" height="26" viewBox="0 0 24 26"><path d="M8 7V4.500a4 4 0 018 0V7" fill="none" stroke="#ddd" strokeWidth="1.400" /><path d="M.5 6.500h23V24H.5z" fill="#fff" /><path d="M6.500 10h5v5h-5z" fill="#f25022" /><path d="M12.500 10h5v5h-5z" fill="#7fba00" /><path d="M6.500 16h5v5h-5z" fill="#00a4ef" /><path d="M12.500 16h5v5h-5z" fill="#ffb900" /></svg>
      </button>
      <button type="button" aria-label="VLC" className={`${app} w-[50px]`}>
        <svg width="20" height="28" viewBox="0 0 20 28"><path d="M8.500 .5h3L17 20H3z" fill="#f58a07" /><path d="M7.200 6h5.600l1.300 4.500H5.900zM5 13.800h10l1 3.500H4z" fill="#eee" /><path d="M3 19L.5 27h19L17 19l-1 2.500H4z" fill="#f07800" /></svg>
      </button>
      <button type="button" aria-label="Opera" className={`${app} w-12 border-b-2 border-[#ff7a00] bg-[#9c5a27]`}>
        <svg width="24" height="28" viewBox="0 0 24 28"><path fillRule="evenodd" d="M12 .5C18.500 .5 23 6.500 23 14s-4.500 13.500-11 13.500S1 21.500 1 14 5.500 .5 12 .5zM12 4.500C9 4.500 7.500 9 7.500 14s1.500 9.500 4.500 9.500 4.500-4.500 4.500-9.500S15 4.500 12 4.500z" fill="#e0142a" /><path d="M4 8.500q-1.500 5.500 0 11" stroke="#ff4a5a" fill="none" strokeWidth="1.500" /></svg>
      </button>
      <button type="button" aria-label="Tableau" className={`${app} w-[49px] border-b-2 border-l border-[#76b9ed] border-l-[#050c16] bg-[#3a414c]`}>
        <TableauMark size={22} />
      </button>
      <div className="ml-auto flex h-10 items-center">
        <button type="button" aria-label="People" className="mr-[18px]"><Ico size={18} color="#fff" sw={1.200}><circle cx="11" cy="4.500" r="3" /><path d="M7.500 13q0-5 3.500-5t5 3.500" /><circle cx="5.500" cy="9.500" r="2.300" /><path d="M1.500 16q.5-4 4-4t4 4" /></Ico></button>
        <button type="button" aria-label="Show hidden icons" className="mr-2.5"><Ico size={16} color="#fff" sw={1.300}><path d="M2.500 11L8 5.500 13.500 11" /></Ico></button>
        <button type="button" aria-label="Network" className="mr-2"><Ico size={16} color="#ddd" sw={1.200}><path d="M2 14C2 7 7 2.500 14 2.500M5 14.500C5 9.500 9 6 14 6M8 15c0-3.500 3-6 6-6M11 15c0-2 1.500-3 3-3" /><path d="M13 13h2v2h-2z" fill="#fff" /></Ico></button>
        <button type="button" aria-label="Volume" className="mr-2"><Ico size={18} color="#fff" sw={1.100}><path d="M1.500 6.500h2L7 3v12l-3.500-3.500h-2zM9.500 6q1.500 3 0 6M12 4.500q2.500 4.500 0 9M14.500 3q3.500 6 0 12" /></Ico></button>
        <button type="button" aria-label="Battery" className="mr-2"><Ico size={16} color="#fff" sw={1.200}><path d="M1 4.500h12.500v8H1zM15 6.500v4" /><path d="M3 6.500h3v4H3z" fill="#fff" /></Ico></button>
        <span className="mr-3 font-['Roboto','Open_Sans',sans-serif] text-xs">ENG</span>
        <div className="mr-[18px] text-center font-['Roboto','Open_Sans',sans-serif] text-xs leading-[18px]"><div>06:35</div><div>12-10-2023</div></div>
        <button type="button" aria-label="Notifications" className="relative mr-3 h-6 w-6">
          <svg width="26" height="28" viewBox="0 0 26 28"><path d="M1 1h16v13H8l-4 4v-4H1z" fill="#fff" /><path d="M4 5h10M4 8h10M4 11h7" stroke="#050c16" /></svg>
          <span className="absolute left-2 top-2.5 flex h-[17px] w-[17px] items-center justify-center rounded-full border border-[#999] bg-[#2b2f36] text-[11px] font-semibold">2</span>
        </button>
        <span className="h-10 w-px bg-[#555]" />
        <span className="w-1" />
      </div>
    </footer>
  );
}

export default function App() {
  return (
    <div className={`flex h-screen flex-col overflow-hidden bg-white ${ui}`}>
      <TitleBar />
      <MenuBar />
      <Toolbar />
      <div className="flex min-h-0 flex-1">
        <SidePanel />
        <Workspace />
      </div>
      <SheetTabs />
      <StatusBar />
      <Taskbar />
    </div>
  );
}
